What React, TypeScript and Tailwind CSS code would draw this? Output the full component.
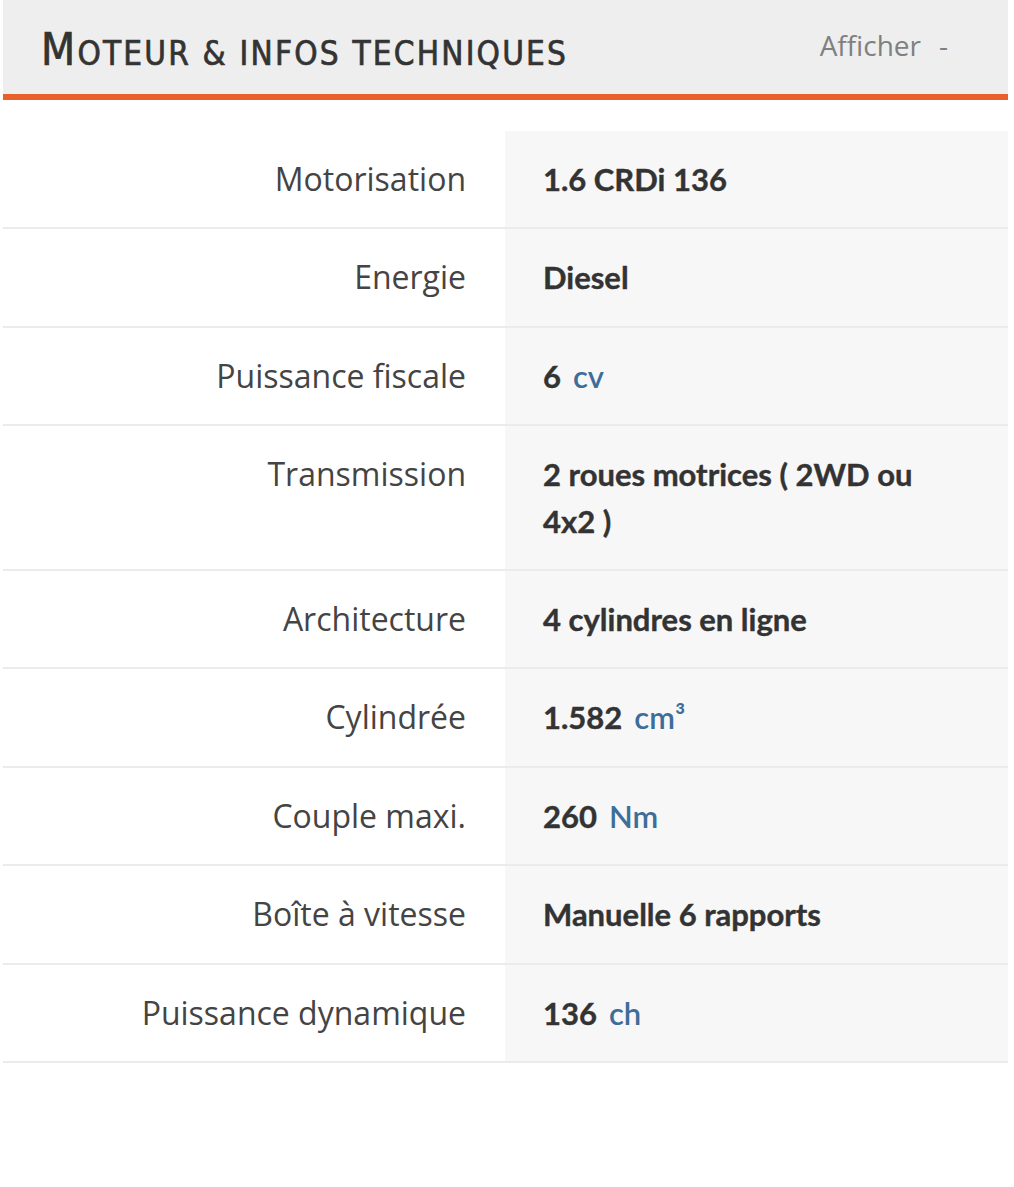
import React from "react";

type Row = { label: string; value: string; unit?: string };

const rows: Row[] = [
  { label: "Motorisation", value: "1.6 CRDi 136" },
  { label: "Energie", value: "Diesel" },
  { label: "Puissance fiscale", value: "6", unit: "cv" },
  { label: "Transmission", value: "2 roues motrices ( 2WD ou 4x2 )" },
  { label: "Architecture", value: "4 cylindres en ligne" },
  { label: "Cylindrée", value: "1.582", unit: "cm³" },
  { label: "Couple maxi.", value: "260", unit: "Nm" },
  { label: "Boîte à vitesse", value: "Manuelle 6 rapports" },
  { label: "Puissance dynamique", value: "136", unit: "ch" },
];

const App: React.FC = () => {
  return (
    <div className="min-h-[1187px] bg-white pl-[3px] pr-[6px]">
      <div className="flex h-[94px] items-center justify-between bg-[#eeeeee] pl-[38px] pr-[60px]">
        <h2 className="pt-[6px] font-['DejaVu_Sans_Condensed',sans-serif] text-[33px] font-normal uppercase leading-none tracking-[2.2px] text-[#333333] [-webkit-text-stroke:0.7px_#333333]">
          <span className="text-[44px]">M</span>oteur &amp; infos techniques
        </h2>
        <div className="flex items-center gap-[18px] pb-[4px] font-['Open_Sans',sans-serif] text-[28px] text-[#808080]">
          <span>Afficher</span>
          <span>-</span>
        </div>
      </div>
      <div className="h-[6px] bg-[#e8602c]" />
      <div className="mt-[31px]">
        {rows.map((r) => (
          <div key={r.label} className="flex border-b-2 border-[#ebebeb]">
            <div className="w-[502px] shrink-0 py-[25px] pr-[39px] text-right font-['Open_Sans',sans-serif] text-[32px] leading-[46.4px] text-[#444444]">
              {r.label}
            </div>
            <div className="flex-1 bg-[#f7f7f7] py-[25px] pl-[38px] pr-[80px] font-['Lato',sans-serif] text-[31px] leading-[46.4px]">
              <span className="font-bold text-[#333333] [-webkit-text-stroke:0.4px_#333333]">{r.value}</span>
              {r.unit && (
                <span className="ml-[12px] font-semibold text-[#3d6d99]">{r.unit}</span>
              )}
            </div>
          </div>
        ))}
      </div>
    </div>
  );
};

export default App;
